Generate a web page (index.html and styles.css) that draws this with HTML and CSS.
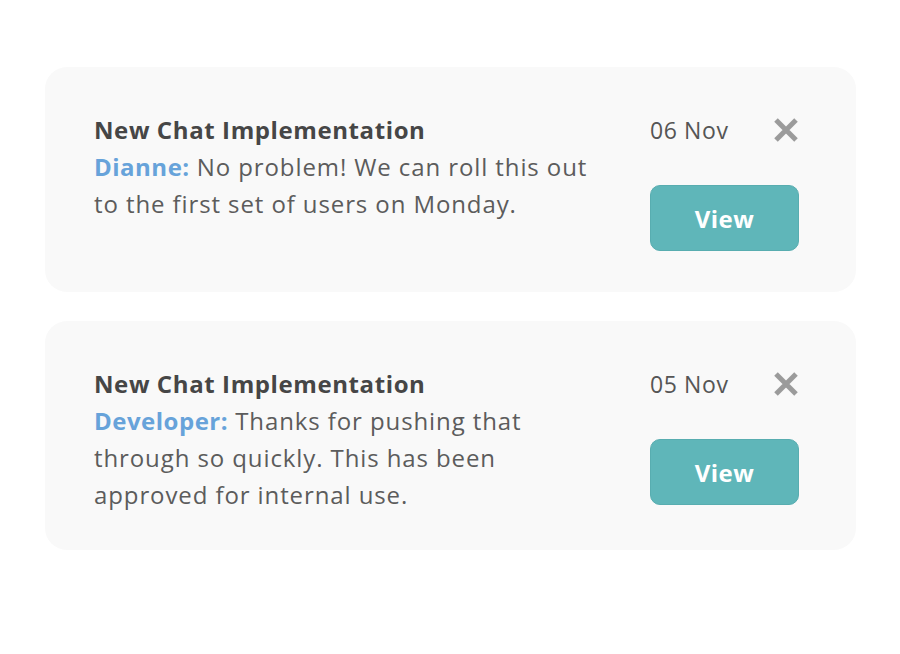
FILE: index.html
```html
<!DOCTYPE html>
<html lang="en">
<head>
  <meta charset="UTF-8" />
  <meta name="viewport" content="width=device-width, initial-scale=1.0" />
  <title>Notifications</title>
  <link rel="stylesheet" href="styles.css">
</head>
<body>
  <div class="list">
    <div class="card">
      <div class="content">
        <h2 class="title">New Chat Implementation</h2>
        <p class="message"><strong class="author">Dianne:</strong> No problem! We can roll this out to the first set of users on Monday.</p>
      </div>
      <div class="side">
        <div class="meta">
          <span class="date">06 Nov</span>
          <button class="close" aria-label="Dismiss">
            <svg viewBox="0 0 26 26" width="26" height="26"><path d="M3 3 L23 23 M23 3 L3 23" stroke="#9b9b9b" stroke-width="5" fill="none"/></svg>
          </button>
        </div>
        <button class="view">View</button>
      </div>
    </div>

    <div class="card">
      <div class="content">
        <h2 class="title">New Chat Implementation</h2>
        <p class="message"><strong class="author">Developer:</strong> Thanks for pushing that through so quickly. This has been approved for internal use.</p>
      </div>
      <div class="side">
        <div class="meta">
          <span class="date">05 Nov</span>
          <button class="close" aria-label="Dismiss">
            <svg viewBox="0 0 26 26" width="26" height="26"><path d="M3 3 L23 23 M23 3 L3 23" stroke="#9b9b9b" stroke-width="5" fill="none"/></svg>
          </button>
        </div>
        <button class="view">View</button>
      </div>
    </div>
  </div>
</body>
</html>
```

FILE: styles.css
```css
body {
  font-family: 'Open Sans', 'Noto Sans', sans-serif;
  background: #fff;
  margin: 0;
  padding: 67px 44px 0 45px;
}
.list {
  display: flex;
  flex-direction: column;
  gap: 29px;
}
.card {
  background: #f9f9f9;
  border-radius: 22px;
  padding: 44px 57px 37px 49px;
  display: flex;
  justify-content: space-between;
  gap: 40px;
}
.content {
  max-width: 505px;
}
.title {
  margin: 0;
  font-size: 24px;
  line-height: 37px;
  font-weight: 700;
  letter-spacing: 0.6px;
  color: #464646;
}
.message {
  margin: 0;
  font-size: 24px;
  line-height: 37px;
  letter-spacing: 0.9px;
  color: #5c5c5c;
}
.author {
  color: #67a3da;
  font-weight: 700;
  letter-spacing: 0.5px;
}
.side {
  width: 149px;
  flex-shrink: 0;
  padding-bottom: 4px;
}
.meta {
  display: flex;
  justify-content: space-between;
  align-items: center;
  height: 37px;
}
.date {
  font-size: 23px;
  letter-spacing: 0.6px;
  color: #555;
}
.close {
  background: none;
  border: none;
  padding: 0;
  width: 26px;
  height: 26px;
  cursor: pointer;
}
.close svg {
  display: block;
}
.view {
  margin-top: 37px;
  width: 149px;
  height: 66px;
  background: #5fb6b9;
  border: 1px solid #58adb0;
  border-radius: 10px;
  color: #fff;
  font-family: inherit;
  font-size: 24px;
  font-weight: 700;
  letter-spacing: 0.5px;
  cursor: pointer;
}
```
